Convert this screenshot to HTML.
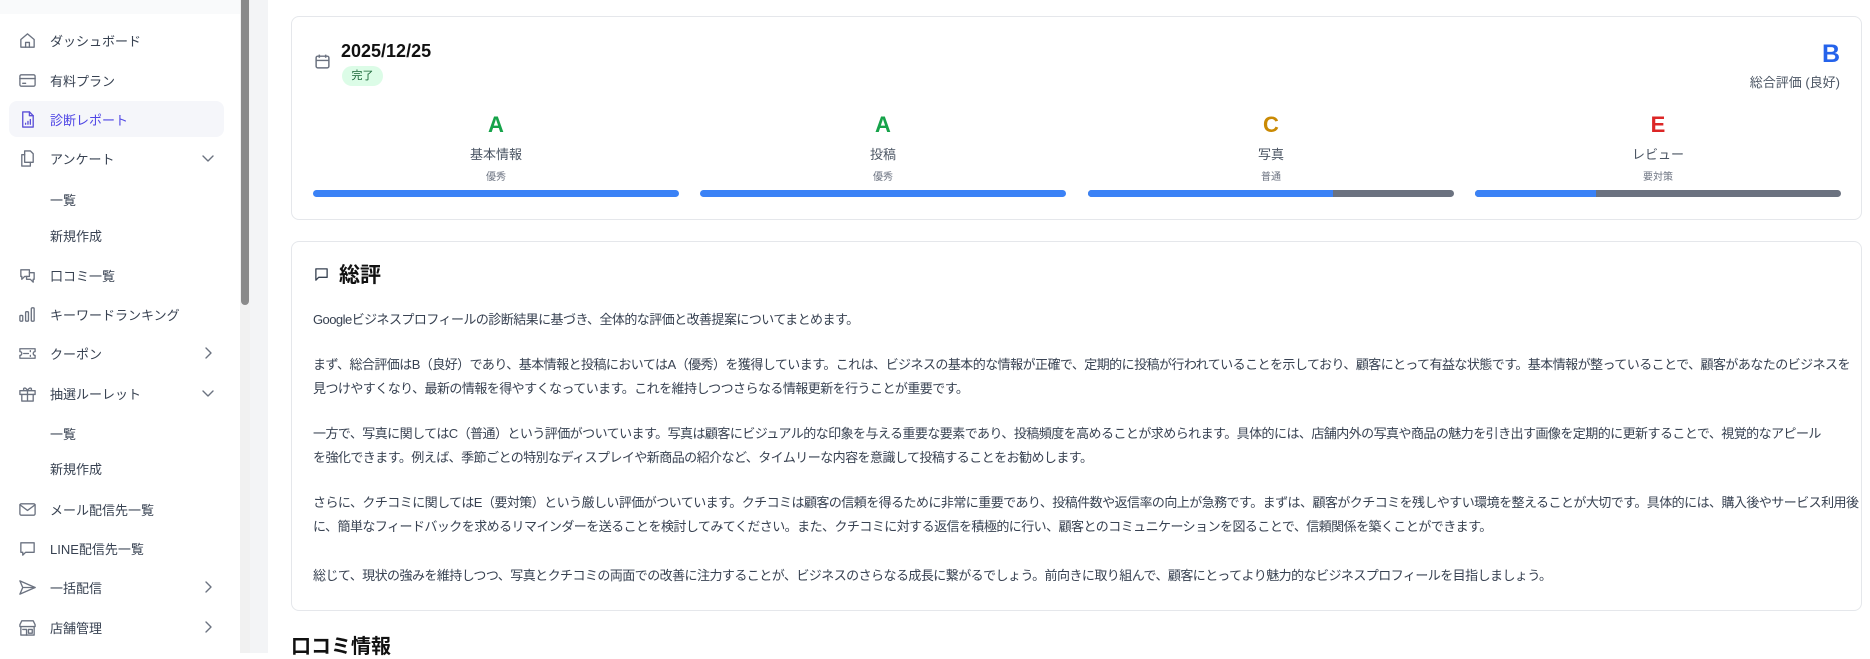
<!DOCTYPE html>
<html><head><meta charset="utf-8">
<style>
*{box-sizing:border-box;margin:0;padding:0}
body{width:1870px;height:653px;overflow:hidden;background:#fff;font-family:"Liberation Sans","Noto Sans CJK JP",sans-serif;color:#374151;position:relative}
.side{position:absolute;left:0;top:0;width:240px;height:653px;background:#fff}
.topstrip{position:absolute;left:0;top:0;width:240px;height:14px;background:#f9fafb}
.sb{position:absolute;left:240px;top:0;width:10px;height:653px;background:#f1f1f1}
.sb i{position:absolute;left:1px;top:0;width:8px;height:305px;background:#8a8a8a;border-radius:0 0 4px 4px}
.strip{position:absolute;left:250px;top:0;width:18px;height:653px;background:#f3f4f6}
.nav{position:absolute;left:0;width:240px;height:36px;font-size:13px;color:#374151;display:flex;align-items:center}
.nav svg{position:absolute;left:18px;top:9px;width:19px;height:19px;fill:none;stroke:#6b7280;stroke-width:1.4;stroke-linecap:round;stroke-linejoin:round}
.nav span{position:absolute;left:50px}
.nav .ch{position:absolute;left:202px;top:12px;width:12px;height:12px}
.nav.sub span{left:50px}
.active{background:#f5f6fa;border-radius:8px;left:9px;width:215px;color:#4f46e5}
.active svg{left:9px;stroke:#5b4fd8}
.active span{left:41px}
.card{position:absolute;left:291px;width:1571px;border:1px solid #e5e7eb;border-radius:8px;background:#fff}
.abs{position:absolute;white-space:nowrap}
.col{position:absolute;top:0;width:366px;text-align:center}
.bar{position:absolute;height:7px;border-radius:4px;background:#6b7280;overflow:hidden}
.bar b{display:block;height:100%;background:#3b82f6}
.txt{position:absolute;left:313px;font-size:13px;letter-spacing:-0.55px;line-height:24px;color:#374151;white-space:nowrap}
</style></head><body>
<div class="side">
<div class="topstrip"></div>
<div class="nav" style="top:22px"><svg viewBox="0 0 20 20"><path d="M3 9l7-6 7 6v8H3z"/><path d="M8 17v-5h4v5"/></svg><span>ダッシュボード</span></div>
<div class="nav" style="top:62px"><svg viewBox="0 0 20 20"><rect x="2" y="4" width="16" height="12" rx="1.5"/><path d="M2 8h16M5 13h3"/></svg><span>有料プラン</span></div>
<div class="nav active" style="top:101px"><svg viewBox="0 0 20 20"><path d="M5 2h7l4 4v12H5z"/><path d="M12 2v4h4M8 14v1M10.5 12v3M13 10v5"/></svg><span>診断レポート</span></div>
<div class="nav" style="top:140px"><svg viewBox="0 0 20 20"><path d="M7 2h6l3 3v9H7z"/><path d="M7 6H4v12h9v-4"/></svg><span>アンケート</span><svg class="ch" viewBox="0 0 12 12" style="left:202px;top:12px"><path d="M1 4l5 5 5-5"/></svg></div>
<div class="nav sub" style="top:181px"><span>一覧</span></div>
<div class="nav sub" style="top:217px"><span>新規作成</span></div>
<div class="nav" style="top:257px"><svg viewBox="0 0 20 20"><path d="M3 4h9v7H7l-3 3v-3H3z"/><path d="M12 7h5v7h-1v3l-3-3H9v-3"/></svg><span>口コミ一覧</span></div>
<div class="nav" style="top:296px"><svg viewBox="0 0 20 20"><rect x="2" y="11" width="3" height="6" rx="1"/><rect x="8" y="7" width="3" height="10" rx="1"/><rect x="14" y="3" width="3" height="14" rx="1"/></svg><span>キーワードランキング</span></div>
<div class="nav" style="top:335px"><svg viewBox="0 0 20 20"><path d="M2 5h16v3a2 2 0 000 4v3H2v-3a2 2 0 000-4z"/><path d="M6 10h5M13 7v1M13 12v1"/></svg><span>クーポン</span><svg class="ch" viewBox="0 0 12 12"><path d="M4 1l5 5-5 5"/></svg></div>
<div class="nav" style="top:375px"><svg viewBox="0 0 20 20"><rect x="2" y="7" width="16" height="4"/><path d="M4 11v7h12v-7M10 7v11M10 7C8 3 5 4 6 6M10 7c2-4 5-3 4-1"/></svg><span>抽選ルーレット</span><svg class="ch" viewBox="0 0 12 12"><path d="M1 4l5 5 5-5"/></svg></div>
<div class="nav sub" style="top:415px"><span>一覧</span></div>
<div class="nav sub" style="top:450px"><span>新規作成</span></div>
<div class="nav" style="top:491px"><svg viewBox="0 0 20 20"><rect x="2" y="4" width="16" height="12" rx="1.5"/><path d="M2 5l8 6 8-6"/></svg><span>メール配信先一覧</span></div>
<div class="nav" style="top:530px"><svg viewBox="0 0 20 20"><path d="M3 4h14v10H8l-3 3v-3H3z"/></svg><span>LINE配信先一覧</span></div>
<div class="nav" style="top:569px"><svg viewBox="0 0 20 20"><path d="M2 3l16 7-16 7 3-7z"/><path d="M5 10h13"/></svg><span>一括配信</span><svg class="ch" viewBox="0 0 12 12"><path d="M4 1l5 5-5 5"/></svg></div>
<div class="nav" style="top:609px"><svg viewBox="0 0 20 20"><path d="M2 7l2-4h12l2 4v2H2zM3 9v9h14V9"/><path d="M5 12h4v6M11 12h4v4h-4z"/></svg><span>店舗管理</span><svg class="ch" viewBox="0 0 12 12"><path d="M4 1l5 5-5 5"/></svg></div>
</div>
<div class="sb"><i></i></div>
<div class="strip"></div>

<div class="card" style="top:16px;height:204px"></div>
<svg class="abs" style="left:314px;top:53px" width="17" height="17" viewBox="0 0 16 16" fill="none" stroke="#6b7280" stroke-width="1.4"><rect x="2" y="3" width="12" height="11" rx="1.5"/><path d="M2 7h12M5 1.5v3M11 1.5v3"/></svg>
<div class="abs" style="left:341px;top:41px;font-size:18px;font-weight:bold;color:#111">2025/12/25</div>
<div class="abs" style="left:342px;top:66px;width:41px;height:20px;border-radius:10px;background:#dcfce7;color:#166534;font-size:11px;line-height:20px;text-align:center">完了</div>
<div class="abs" style="right:30px;top:40px;font-size:25px;font-weight:bold;color:#2563eb">B</div>
<div class="abs" style="right:30px;top:72px;font-size:13px;color:#4b5563">総合評価 (良好)</div>

<div class="col" style="left:313px"><div class="abs" style="left:0;width:366px;top:112px;font-size:22px;font-weight:bold;color:#16a34a">A</div><div class="abs" style="left:0;width:366px;top:144px;font-size:13px;color:#4b5563">基本情報</div><div class="abs" style="left:0;width:366px;top:168px;font-size:10px;color:#6b7280">優秀</div></div>
<div class="col" style="left:700px"><div class="abs" style="left:0;width:366px;top:112px;font-size:22px;font-weight:bold;color:#16a34a">A</div><div class="abs" style="left:0;width:366px;top:144px;font-size:13px;color:#4b5563">投稿</div><div class="abs" style="left:0;width:366px;top:168px;font-size:10px;color:#6b7280">優秀</div></div>
<div class="col" style="left:1088px"><div class="abs" style="left:0;width:366px;top:112px;font-size:22px;font-weight:bold;color:#ca8a04">C</div><div class="abs" style="left:0;width:366px;top:144px;font-size:13px;color:#4b5563">写真</div><div class="abs" style="left:0;width:366px;top:168px;font-size:10px;color:#6b7280">普通</div></div>
<div class="col" style="left:1475px"><div class="abs" style="left:0;width:366px;top:112px;font-size:22px;font-weight:bold;color:#dc2626">E</div><div class="abs" style="left:0;width:366px;top:144px;font-size:13px;color:#4b5563">レビュー</div><div class="abs" style="left:0;width:366px;top:168px;font-size:10px;color:#6b7280">要対策</div></div>
<div class="bar" style="left:313px;top:190px;width:366px"><b style="width:100%"></b></div>
<div class="bar" style="left:700px;top:190px;width:366px"><b style="width:100%"></b></div>
<div class="bar" style="left:1088px;top:190px;width:366px"><b style="width:67%"></b></div>
<div class="bar" style="left:1475px;top:190px;width:366px"><b style="width:33%"></b></div>

<div class="card" style="top:241px;height:370px"></div>
<svg class="abs" style="left:314px;top:267px" width="15" height="15" viewBox="0 0 16 16" fill="none" stroke="#374151" stroke-width="1.4" stroke-linejoin="round"><path d="M2 2h12v9H5l-3 3z"/></svg>
<div class="abs" style="left:339px;top:259px;font-size:21px;font-weight:bold;color:#111">総評</div>
<div class="txt" style="top:308px">Googleビジネスプロフィールの診断結果に基づき、全体的な評価と改善提案についてまとめます。</div>
<div class="txt" style="top:353px">まず、総合評価はB（良好）であり、基本情報と投稿においてはA（優秀）を獲得しています。これは、ビジネスの基本的な情報が正確で、定期的に投稿が行われていることを示しており、顧客にとって有益な状態です。基本情報が整っていることで、顧客があなたのビジネスを<br>見つけやすくなり、最新の情報を得やすくなっています。これを維持しつつさらなる情報更新を行うことが重要です。</div>
<div class="txt" style="top:422px">一方で、写真に関してはC（普通）という評価がついています。写真は顧客にビジュアル的な印象を与える重要な要素であり、投稿頻度を高めることが求められます。具体的には、店舗内外の写真や商品の魅力を引き出す画像を定期的に更新することで、視覚的なアピール<br>を強化できます。例えば、季節ごとの特別なディスプレイや新商品の紹介など、タイムリーな内容を意識して投稿することをお勧めします。</div>
<div class="txt" style="top:491px">さらに、クチコミに関してはE（要対策）という厳しい評価がついています。クチコミは顧客の信頼を得るために非常に重要であり、投稿件数や返信率の向上が急務です。まずは、顧客がクチコミを残しやすい環境を整えることが大切です。具体的には、購入後やサービス利用後<br>に、簡単なフィードバックを求めるリマインダーを送ることを検討してみてください。また、クチコミに対する返信を積極的に行い、顧客とのコミュニケーションを図ることで、信頼関係を築くことができます。</div>
<div class="txt" style="top:564px">総じて、現状の強みを維持しつつ、写真とクチコミの両面での改善に注力することが、ビジネスのさらなる成長に繋がるでしょう。前向きに取り組んで、顧客にとってより魅力的なビジネスプロフィールを目指しましょう。</div>
<div class="abs" style="left:291px;top:630px;font-size:20px;font-weight:bold;color:#111">口コミ情報</div>
</body></html>
